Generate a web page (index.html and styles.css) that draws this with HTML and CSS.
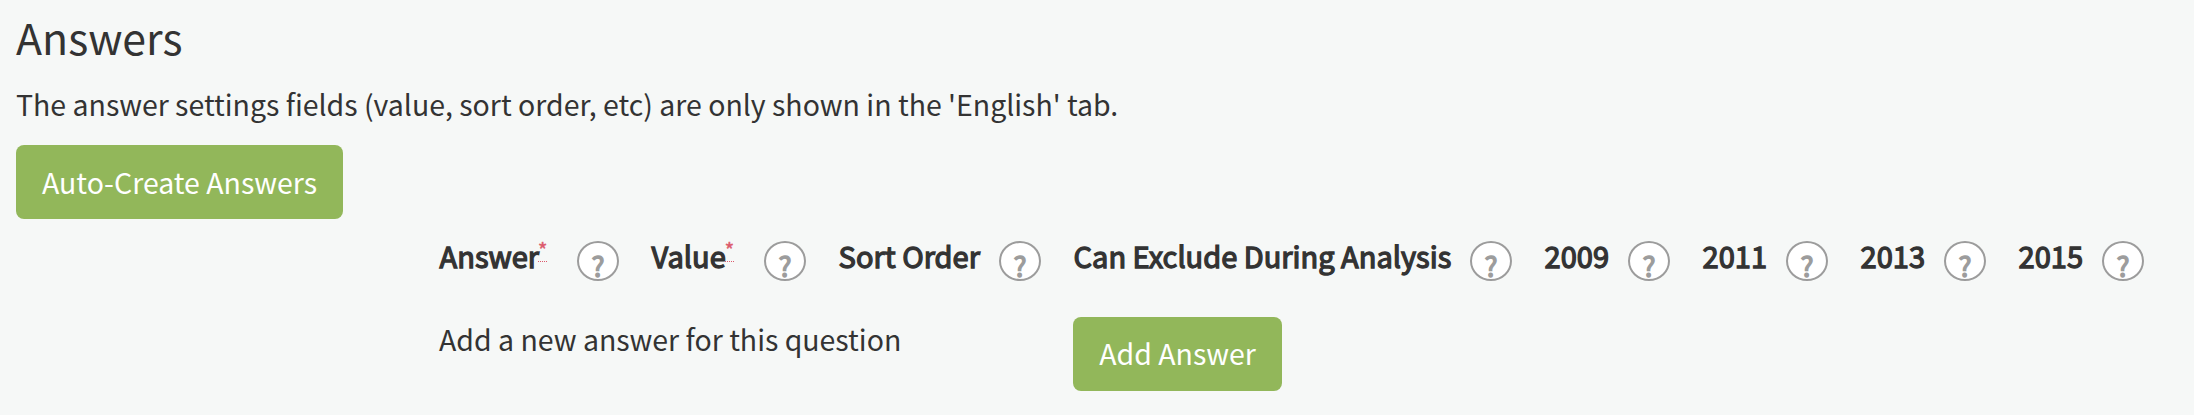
FILE: index.html
```html
<!DOCTYPE html>
<html lang="en">
<head>
<meta charset="utf-8">
<title>Answers</title>
<link rel="stylesheet" href="styles.css">
</head>
<body>
<h1 class="title">Answers</h1>
<p class="intro">The answer settings fields (value, sort order, etc) are only shown in the 'English' tab.</p>
<button class="btn btn-auto">Auto-Create Answers</button>
<div class="grid">
  <div class="head"><span class="label">Answer</span><span class="req">*</span><span class="help">?</span></div>
  <div class="head"><span class="label">Value</span><span class="req">*</span><span class="help">?</span></div>
  <div class="head"><span class="label">Sort Order</span><span class="help">?</span></div>
  <div class="head"><span class="label">Can Exclude During Analysis</span><span class="help">?</span></div>
  <div class="head"><span class="label">2009</span><span class="help">?</span></div>
  <div class="head"><span class="label">2011</span><span class="help">?</span></div>
  <div class="head"><span class="label">2013</span><span class="help">?</span></div>
  <div class="head"><span class="label">2015</span><span class="help">?</span></div>
  <div class="note">Add a new answer for this question</div>
  <button class="btn btn-add">Add Answer</button>
</div>
</body>
</html>
```
FILE: styles.css
```css
* { box-sizing: border-box; }
body {
  margin: 0;
  padding: 0 16px;
  height: 415px;
  overflow: hidden;
  background: #f6f8f7;
  color: #333;
  font-family: "Noto Sans CJK SC", "Noto Sans", sans-serif;
  font-size: 28.48px;
  line-height: 44px;
  white-space: nowrap;
}
.title {
  margin: 0;
  padding-top: 6px;
  font-size: 42.8px;
  font-weight: 400;
  line-height: 60px;
}
.intro { margin: 16px 0 0; }
.btn {
  display: block;
  height: 74px;
  padding: 0 0 2px;
  border: 0;
  border-radius: 8px;
  background: #92b75a;
  color: #fff;
  font: inherit;
  text-align: center;
}
.btn-auto { width: 327px; margin-top: 19px; padding-bottom: 0; }
.grid {
  display: grid;
  grid-template-columns: 212px 187px 235px 471px 158px 158px 158px 126px;
  margin: 22px 0 0 423px;
}
.head {
  display: flex;
  height: 76px;
  padding-right: 32px;
}
.head:nth-child(8) { padding-right: 0; }
.label {
  height: 44px;
  margin: -8px 0 0 0.6px;
  font-size: 29px;
  -webkit-text-stroke: 1.3px #333;
}
.req {
  height: 21px;
  margin-left: -1px;
  border-bottom: 1px dotted #dc5a6c;
  color: #dc5a6c;
  font-size: 20px;
  line-height: 18px;
  -webkit-text-stroke: 0.5px #dc5a6c;
}
.help {
  flex: none;
  width: 42px;
  height: 40px;
  margin-left: auto;
  border: 2px solid #9c9c9c;
  border-radius: 50%;
  background: #fff;
  color: #9c9c9c;
  font-size: 27.5px;
  line-height: 44px;
  text-align: center;
  -webkit-text-stroke: 1.3px #9c9c9c;
}
.note { grid-column: 1 / 4; }
.btn-add { grid-column: 4; width: 209px; }
```
